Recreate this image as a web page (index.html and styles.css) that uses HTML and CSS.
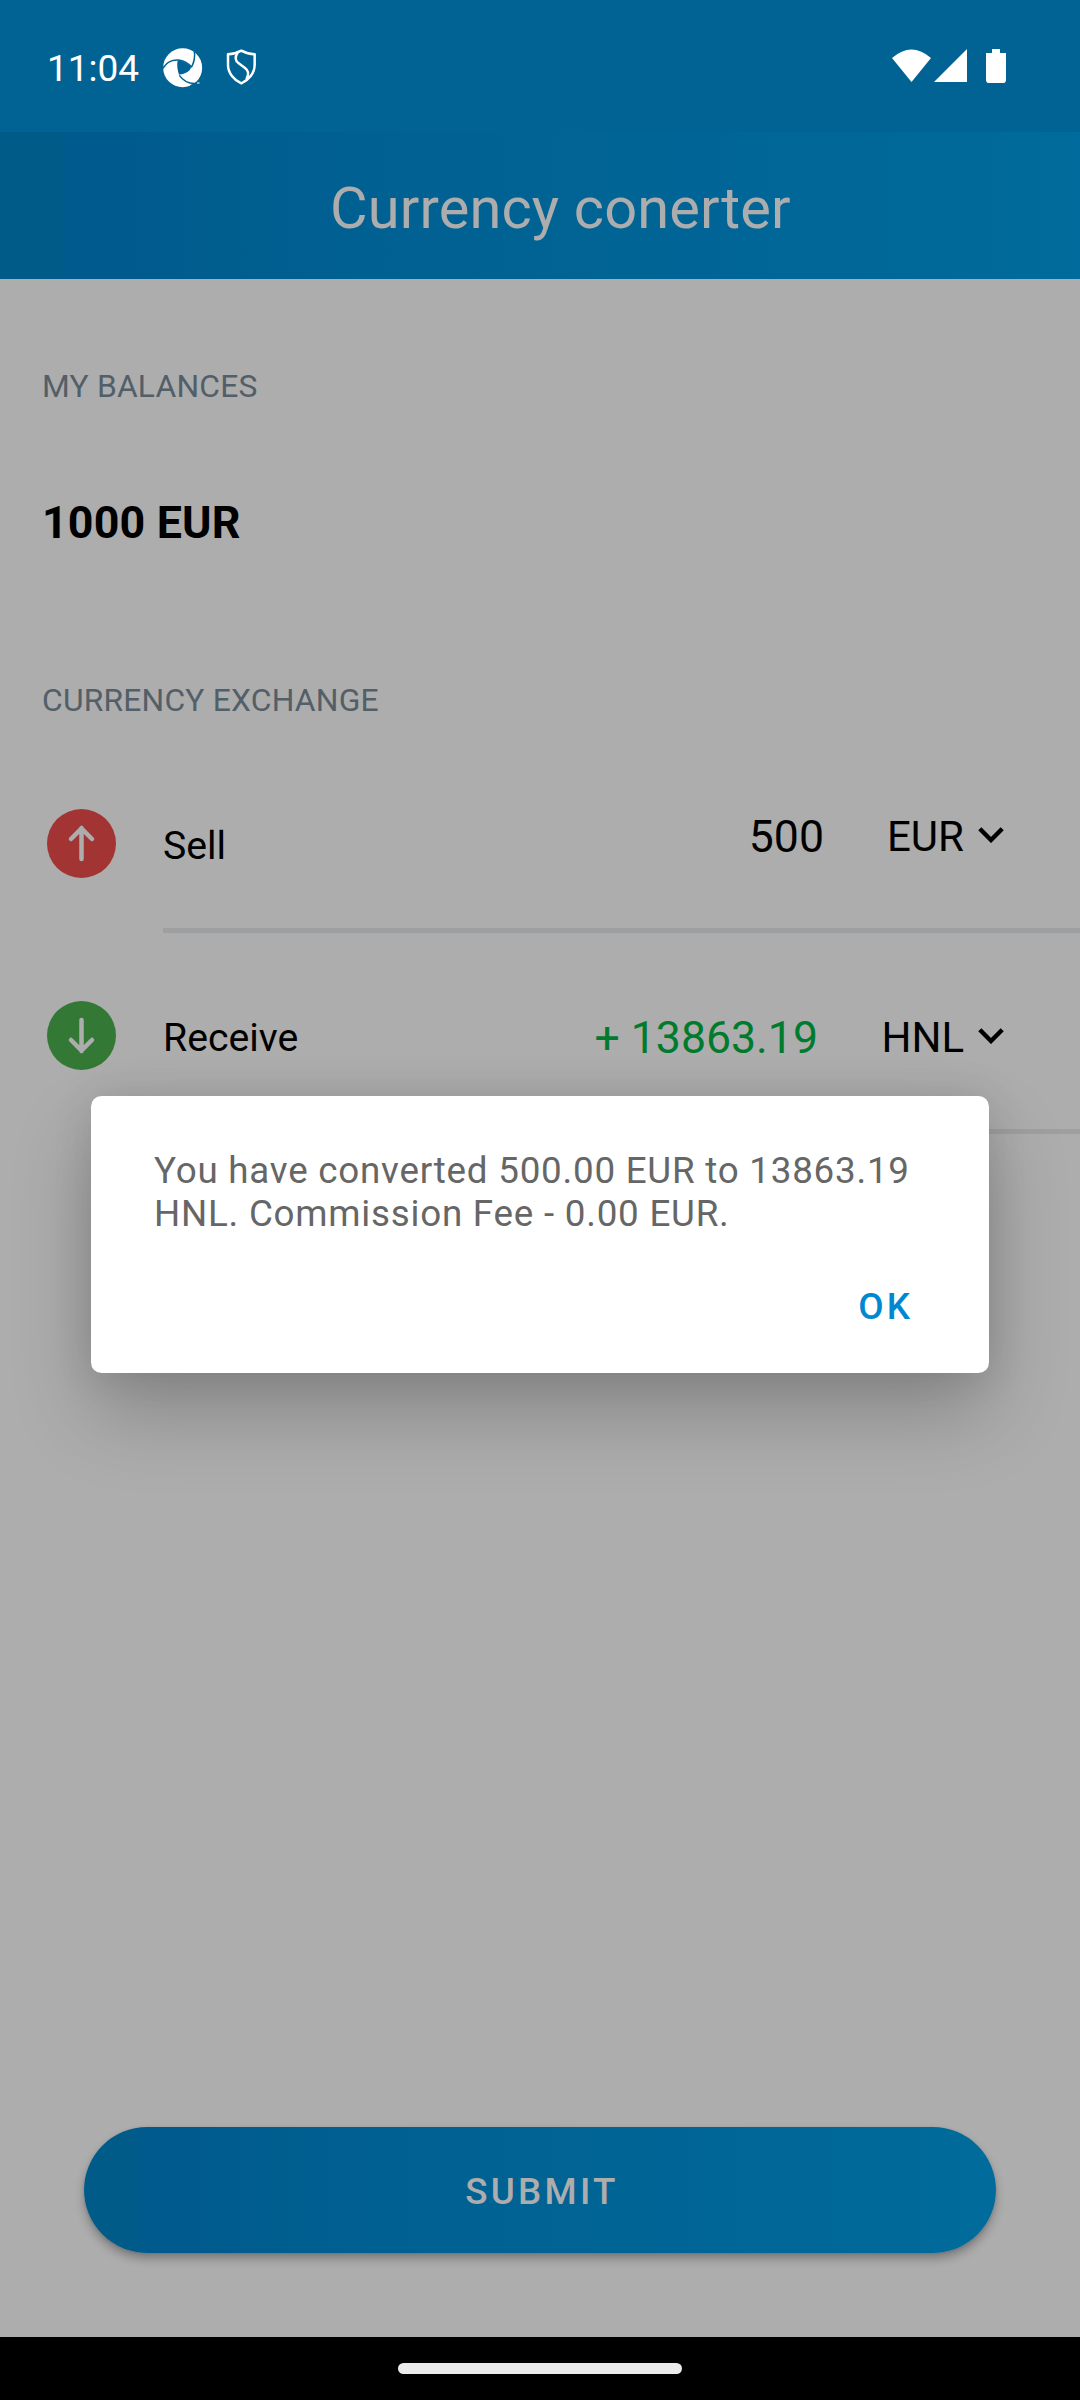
FILE: index.html
```html
<!DOCTYPE html>
<html lang="en">
<head>
<meta charset="utf-8">
<title>Currency conerter</title>
<link rel="stylesheet" href="styles.css">
</head>
<body>
<div class="screen">
  <div class="status-bar">
    <span class="clock">11:04</span>
    <svg class="status-aperture" viewBox="489 83 120 120" width="40" height="40">
      <circle cx="548" cy="142" r="58.500" fill="#fff"/>
      <path d="M533 120Q556 123 574 140Q568 160 537 163Q529 141 533 120Z" fill="#006394"/>
      <g fill="none" stroke="#006394" stroke-width="4.500">
        <path d="M488 145Q504 117 535 119Q558 122 575 140"/>
        <path d="M583 92Q587 118 574 141"/>
        <path d="M538 165Q557 192 590 189"/>
      </g>
      <path d="M572 193L598 183L602 205L565 205Z" fill="#006394"/>
      <path d="M591 188h8" stroke="#fff" stroke-width="3"/>
    </svg>
    <svg class="status-shield" viewBox="678 88 93 108" width="31" height="36" fill="none" stroke="#fff" stroke-width="7.500" stroke-linejoin="round" stroke-linecap="round">
      <path d="M724 93Q706 103 684 104V136C684 160 702 181 724 191C746 181 764 160 764 136V104Q742 103 724 93Z"/>
      <path d="M712 101C704 112 706 124 716 131L735 145C746 153 746 166 740 177"/>
    </svg>
    <svg class="status-signals" viewBox="0 0 115 35" width="115" height="35" fill="#fff">
      <path d="M0 9Q19.500 -8 39 9L19.500 33Z"/>
      <path d="M42 33L75 0V33Z"/>
      <path d="M100 0h8v4h6v28l-1.500 2h-17l-1.500-2V4h6z"/>
    </svg>
  </div>
  <header class="app-bar"><h1 class="app-title">Currency conerter</h1></header>
  <main class="content">
    <h2 class="section-label">MY BALANCES</h2>
    <p class="balance">1000 EUR</p>
    <h2 class="section-label">CURRENCY EXCHANGE</h2>
    <section class="exchange">
      <div class="row row-sell">
        <svg class="row-icon" viewBox="0 0 69 69" width="69" height="69">
          <circle cx="34.500" cy="34.500" r="34.500" fill="#a33434"/>
          <path d="M34.500 50V19M24 30L34.500 19.500L45 30" fill="none" stroke="#adadad" stroke-width="4.500" stroke-linecap="round"/>
        </svg>
        <div class="row-body">
          <span class="row-label">Sell</span>
          <span class="amount">500</span>
          <span class="currency">EUR
            <svg viewBox="0 0 26 16" width="26" height="16"><path d="M1.800 1.800L13 13L24.200 1.800" fill="none" stroke="#000" stroke-width="4.400"/></svg>
          </span>
        </div>
      </div>
      <div class="row row-receive">
        <svg class="row-icon" viewBox="0 0 69 69" width="69" height="69">
          <circle cx="34.500" cy="34.500" r="34.500" fill="#347836"/>
          <path d="M34.500 19V50M24 39L34.500 49.500L45 39" fill="none" stroke="#adadad" stroke-width="4.500" stroke-linecap="round"/>
        </svg>
        <div class="row-body">
          <span class="row-label">Receive</span>
          <span class="amount amount-in">+ 13863.19</span>
          <span class="currency">HNL
            <svg viewBox="0 0 26 16" width="26" height="16"><path d="M1.800 1.800L13 13L24.200 1.800" fill="none" stroke="#000" stroke-width="4.400"/></svg>
          </span>
        </div>
      </div>
    </section>
    <button class="submit">SUBMIT</button>
  </main>
  <footer class="nav-bar"><div class="nav-pill"></div></footer>
  <div class="dialog" role="dialog">
    <p class="dialog-text">You have converted 500.00 EUR to 13863.19<br>HNL. Commission Fee - 0.00 EUR.</p>
    <button class="dialog-ok">OK</button>
  </div>
</div>
</body>
</html>
```
FILE: styles.css
```css
* { box-sizing: border-box; margin: 0; padding: 0; }
body { font-family: Roboto, sans-serif; background: #adadad; }
button { border: 0; background: none; font-family: inherit; }
svg { display: block; flex: none; }

.screen {
  position: relative;
  display: flex;
  flex-direction: column;
  width: 1080px;
  height: 2400px;
  overflow: hidden;
}

.status-bar {
  display: flex;
  align-items: flex-start;
  height: 132px;
  padding-left: 47px;
  background: #006394;
}
.clock { width: 116px; margin-top: 47px; font-size: 37px; line-height: 44px; color: #fff; }
.status-aperture { margin-top: 48px; }
.status-shield { margin: 49px 0 0 23px; }
.status-signals { margin: 49px 0 0 635px; }

.app-bar {
  height: 147px;
  padding: 42px 0 0 330px;
  background: linear-gradient(90deg, #005b88 0%, #005b89 5%, #005a8d 7%, #005a8d 12%, #005e8f 20%, #006394 50%, #006b9c 100%);
}
.app-title { font-size: 57.75px; line-height: 68px; font-weight: 400; letter-spacing: .15px; color: #adadad; }

.content { display: flex; flex-direction: column; flex: 1; padding-top: 88px; background: #adadad; }
.section-label { padding-left: 42px; font-size: 31.8px; line-height: 38px; letter-spacing: .2px; font-weight: 400; color: #535f68; }
.balance { margin: 92px 0 132px; padding-left: 42px; font-size: 44.8px; line-height: 52px; letter-spacing: .15px; font-weight: 700; color: #000; }

.row { display: flex; padding-left: 47px; }
.row-sell { height: 214px; }
.row-receive { height: 201px; }
.row-body {
  display: flex;
  align-items: flex-start;
  flex: 1;
  margin-left: 47px;
  padding-right: 76px;
  border-bottom: 5px solid #9d9fa1;
  color: #000;
}
.row-sell .row-icon { margin-top: 90px; }
.row-receive .row-icon { margin-top: 68px; }
.row-label { font-size: 39.2px; line-height: 46px; }
.row-sell .row-label { margin-top: 104px; }
.row-receive .row-label { margin-top: 82px; }
.amount { flex: 1; padding-right: 1px; text-align: right; font-size: 44.6px; line-height: 52px; }
.amount-in { padding-right: 7px; color: #007b2d; }
.row-sell .amount { margin-top: 92px; }
.row-receive .amount { margin-top: 79px; }
.currency {
  display: flex;
  justify-content: flex-end;
  gap: 14px;
  width: 179px;
  font-size: 42px;
  line-height: 50px;
}
.currency svg { margin-top: 15px; }
.row-sell .currency { margin-top: 93px; }
.row-receive .currency { margin-top: 80px; }

.submit {
  width: 912px;
  height: 126px;
  margin: auto 0 84px 84px;
  padding: 2px 0 0 4px;
  border-radius: 63px;
  background: linear-gradient(90deg, #005b88 0%, #005b89 5%, #005a8d 7%, #005a8d 12%, #005e8f 20%, #006394 50%, #006b9c 100%);
  box-shadow: 0 6px 10px rgba(0, 0, 0, .27), 0 1px 3px rgba(0, 0, 0, .12);
  color: #adadad;
  font-size: 36.75px;
  font-weight: 500;
  letter-spacing: 3.28px;
}

.nav-bar { display: flex; justify-content: center; height: 63px; padding-top: 26px; background: #000; }
.nav-pill { width: 284px; height: 11px; border-radius: 6px; background: #ebebeb; }

.dialog {
  position: absolute;
  left: 91px;
  top: 1096px;
  display: flex;
  flex-direction: column;
  width: 898px;
  height: 277px;
  padding: 53px 76px 0 63px;
  border-radius: 10.5px;
  background: #fff;
  box-shadow: 0 40px 80px rgba(0, 0, 0, .22), 0 0 40px rgba(0, 0, 0, .1);
}
.dialog-text { font-size: 36.75px; line-height: 43px; letter-spacing: .77px; color: #666; white-space: nowrap; }
.dialog-ok {
  align-self: flex-end;
  margin-top: 50px;
  font-size: 36.75px;
  line-height: 43px;
  font-weight: 500;
  letter-spacing: 3.1px;
  color: #0087d1;
}
```
